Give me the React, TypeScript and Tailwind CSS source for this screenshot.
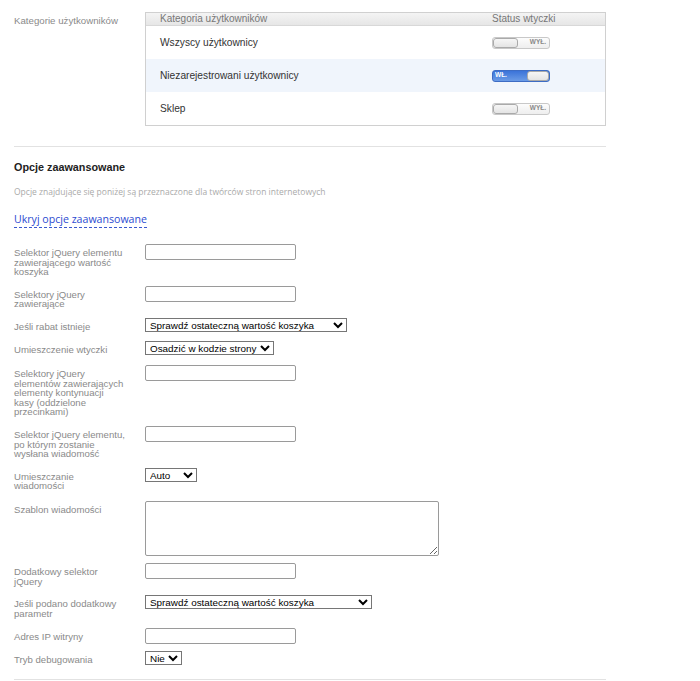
import React from "react";

const font = "font-['Liberation_Sans',Arial,sans-serif]";

const Toggle = ({ on }: { on: boolean }) => {
  if (on) {
    return (
      <div className="relative flex h-[12px] w-[58px] items-center overflow-hidden rounded-[3px] border border-[#3d6cc4] bg-gradient-to-b from-[#3b73d9] to-[#6b9be6]">
        <span className="pl-[2px] text-[6.5px] font-bold leading-none text-white">WŁ.</span>
        <div className="absolute right-0 top-0 h-full w-[22px] rounded-[3px] border border-[#aaa] bg-gradient-to-b from-[#f6f6f6] to-[#e4e4e4]" />
      </div>
    );
  }
  return (
    <div className="relative flex h-[12px] w-[58px] items-center justify-end overflow-hidden rounded-[3px] border border-[#c8c8c8] bg-gradient-to-b from-[#fcfcfc] to-[#eeeeee]">
      <span className="pr-[3px] text-[6.5px] font-bold leading-none text-[#888]">WYŁ.</span>
      <div className="absolute left-0 top-0 h-full w-[25px] rounded-[3px] border border-[#aaa] bg-gradient-to-b from-[#f6f6f6] to-[#e4e4e4]" />
    </div>
  );
};

const Row = ({ label, children, mb = "mb-[9px]" }: { label: React.ReactNode; children: React.ReactNode; mb?: string }) => (
  <div className={`${mb} flex items-start`}>
    <div className="w-[131px] pt-[4px] pr-[10px] text-[9.6px] leading-[9.6px] text-[#8a8a8a]">{label}</div>
    <div>{children}</div>
  </div>
);

const TextInput = () => (
  <input type="text" className="block h-[16px] w-[151px] rounded-[2px] border border-[#9a9a9a] bg-white" />
);

const Select = ({ options, w }: { options: string[]; w: string }) => (
  <select className={`block h-[14px] ${w} border border-[#767676] bg-white px-0 text-[9.9px] leading-[12px] text-black`}>
    {options.map((o) => (
      <option key={o}>{o}</option>
    ))}
  </select>
);

export default function App() {
  const rows = [
    { name: "Wszyscy użytkownicy", on: false },
    { name: "Niezarejestrowani użytkownicy", on: true },
    { name: "Sklep", on: false },
  ];

  return (
    <div className={`${font} min-h-[681px] w-[700px] bg-white pl-[14px] pt-[12px]`}>
      <div className="w-[592px]">
        <div className="flex items-start">
          <div className="w-[131px] pt-[3px] text-[9.7px] leading-[12px] text-[#8a8a8a]">Kategorie użytkowników</div>
          <div className="w-[461px] border border-[#d0d0d0]">
            <div className="flex h-[13px] items-center border-b border-[#d8d8d8] bg-gradient-to-b from-[#f4f4f4] to-[#e6e6e6] text-[10px] leading-none text-[#777]">
              <div className="flex-1 pl-[14px]">Kategoria użytkowników</div>
              <div className="w-[114px] pl-[1px]">Status wtyczki</div>
            </div>
            {rows.map((r, i) => (
              <div
                key={r.name}
                className={`flex h-[33px] items-center text-[10.2px] text-[#333] ${i === 1 ? "bg-[#f0f5fc]" : "bg-white"}`}
              >
                <div className="flex-1 pl-[14px]">{r.name}</div>
                <div className="w-[114px] pl-[1px]">
                  <Toggle on={r.on} />
                </div>
              </div>
            ))}
          </div>
        </div>

        <div className="mt-[20px] border-t border-[#e2e2e2]" />

        <h2 className="mt-[14px] text-[10.8px] font-bold leading-[13px] text-[#222]">Opcje zaawansowane</h2>
        <p className="mt-[13px] font-['Open_Sans',sans-serif] text-[8.5px] leading-[10px] text-[#aaa]">
          Opcje znajdujące się poniżej są przeznaczone dla twórców stron internetowych
        </p>
        <div className="mt-[9px]">
          <a className="border-b border-dashed border-[#3a58d0] pb-[1px] font-['Open_Sans',sans-serif] text-[10.6px] leading-[12px] text-[#2c4ad0]">
            Ukryj opcje zaawansowane
          </a>
        </div>

        <div className="mt-[14px]">
          <Row
            label={
              <>
                Selektor jQuery elementu
                <br />
                zawierającego wartość
                <br />
                koszyka
              </>
            }
          >
            <TextInput />
          </Row>
          <Row
            label={
              <>
                Selektory jQuery
                <br />
                zawierające
              </>
            }
          >
            <TextInput />
          </Row>
          <Row label="Jeśli rabat istnieje" mb="mb-[9px]">
            <Select w="w-[202px]" options={["Sprawdź ostateczną wartość koszyka"]} />
          </Row>
          <Row label="Umieszczenie wtyczki" mb="mb-[10px]">
            <Select w="w-auto" options={["Osadzić w kodzie strony"]} />
          </Row>
          <Row
            label={
              <>
                Selektory jQuery
                <br />
                elementów zawierających
                <br />
                elementy kontynuacji
                <br />
                kasy (oddzielone
                <br />
                przecinkami)
              </>
            }
          >
            <TextInput />
          </Row>
          <Row
            label={
              <>
                Selektor jQuery elementu,
                <br />
                po którym zostanie
                <br />
                wysłana wiadomość
              </>
            }
          >
            <TextInput />
          </Row>
          <Row
            label={
              <>
                Umieszczanie
                <br />
                wiadomości
              </>
            }
            mb="mb-[10px]"
          >
            <Select w="w-[52px]" options={["Auto"]} />
          </Row>
          <Row label="Szablon wiadomości" mb="mb-[7px]">
            <textarea className="block h-[55px] w-[294px] rounded-[2px] border border-[#9a9a9a] bg-white" />
          </Row>
          <Row
            label={
              <>
                Dodatkowy selektor
                <br />
                jQuery
              </>
            }
          >
            <TextInput />
          </Row>
          <Row
            label={
              <>
                Jeśli podano dodatkowy
                <br />
                parametr
              </>
            }
            mb="mb-[10px]"
          >
            <Select w="w-[227px]" options={["Sprawdź ostateczną wartość koszyka"]} />
          </Row>
          <Row label="Adres IP witryny" mb="mb-[7px]">
            <TextInput />
          </Row>
          <Row label="Tryb debugowania" mb="mb-[9px]">
            <Select w="w-auto" options={["Nie"]} />
          </Row>
        </div>

        <div className="mt-[14px] border-t border-[#e2e2e2]" />
      </div>
    </div>
  );
}
